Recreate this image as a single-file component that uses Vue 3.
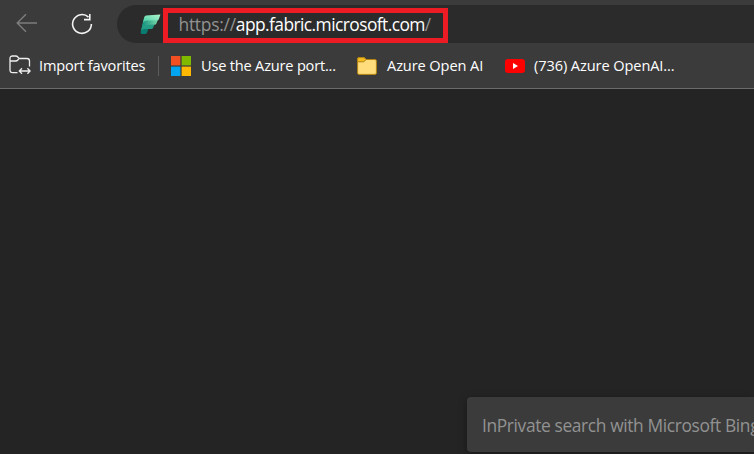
<script setup>
const bookmarks = [
  { icon: 'microsoft', label: 'Use the Azure port...' },
  { icon: 'folder', label: 'Azure Open AI' },
  { icon: 'youtube', label: '(736) Azure OpenAI...' },
]
</script>

<template>
  <div class="browser">
    <header class="chrome">
      <div class="toolbar">
        <svg class="back" width="22" height="20" viewBox="0 0 22 20">
          <path d="M21 10H1.5M10 1.2L1.2 10L10 18.8" />
        </svg>
        <svg class="reload" width="22" height="22" viewBox="0 0 22 22">
          <path d="M17.5 4.2A9.4 9.4 0 1 0 20.4 11M18.8 1V6.6H13" />
        </svg>
        <div class="address">
          <svg class="fabric" width="21" height="21" viewBox="0 0 21 21">
            <defs>
              <linearGradient id="mint" x1="0" y1="1" x2="1" y2="0">
                <stop offset="0" stop-color="#45cda5" /><stop offset="1" stop-color="#b0f5cc" />
              </linearGradient>
              <linearGradient id="teal" x1="0" y1="0" x2="1" y2="0">
                <stop offset="0" stop-color="#15917f" /><stop offset="1" stop-color="#75d8a9" />
              </linearGradient>
            </defs>
            <path fill="#087c70" d="M2.5 10L9 12.6L7.1 18.5Q6.5 20 5 20H2Q.2 20 .7 18Z" />
            <path fill="#249d86" d="M3 9.5L14.5 10.5L13 14Q12.5 15 11 15H4Q1.7 15.3 1 17.4L2.2 11.5Z" />
            <path fill="url(#teal)" d="M3.8 5.5H18L16.4 9.6Q16 10.8 14.5 10.8H5.5Q2.8 11 1.9 13.2L3 7.5Z" />
            <path fill="url(#mint)" d="M6 1.5L20.4.5L19 4.8Q18.6 6.5 17 6.5H6.5Q4 6.7 3 8.8L4.1 3.5Q4.5 1.8 6 1.5Z" />
          </svg>
          <span class="url">https://<b>app.fabric.microsoft.com</b>/</span>
          <div class="highlight"></div>
        </div>
      </div>
      <nav class="favorites">
        <div class="item import">
          <svg class="import-icon" width="22" height="20" viewBox="0 0 22 20">
            <path d="M8.5 17.6H3.5Q1 17.6 1 15.1V3.5Q1 1 3.5 1H6.8Q8 1 8.8 2L10.1 3.5H18Q20.5 3.5 20.5 6V11.5M1 6H6.8Q8 6 8.8 5L10.1 3.5M10.8 16H20.8M13 13.3L10.3 16L13 18.7M18.4 13.3L21.1 16L18.4 18.7" />
          </svg>
          <span>Import favorites</span>
        </div>
        <i class="divider"></i>
        <div v-for="b in bookmarks" :key="b.icon" class="item" :class="b.icon">
          <svg v-if="b.icon === 'microsoft'" width="20" height="20" viewBox="0 0 20 20">
            <path fill="#f25022" d="M0 0h9.4v9.4H0z" /><path fill="#7fba00" d="M10.6 0H20v9.4h-9.4z" />
            <path fill="#00a4ef" d="M0 10.6h9.4V20H0z" /><path fill="#ffb900" d="M10.6 10.6H20V20h-9.4z" />
          </svg>
          <svg v-else-if="b.icon === 'folder'" width="20" height="18" viewBox="0 0 20 18">
            <path fill="#ffdc7c" stroke="#b28313" d="M.6 2Q.6.6 2 .6H6.4Q7.4.6 8 1.4L9 2.5H18Q19.4 2.5 19.4 4V16Q19.4 17.4 18 17.4H2Q.6 17.4.6 16Z" />
            <path fill="#f5bd20" stroke="#b28313" d="M.6 2Q.6.6 2 .6H6.4Q7.4.6 8 1.4L9 2.5L7.7 4Q7 4.8 6 4.8H.6Z" />
          </svg>
          <svg v-else width="20" height="14" viewBox="0 0 20 14">
            <rect width="20" height="14" rx="3" fill="#f00" /><path fill="#fff" d="M8 4L13 7L8 10Z" />
          </svg>
          <span>{{ b.label }}</span>
        </div>
      </nav>
    </header>
    <main class="page">
      <div class="search">InPrivate search with Microsoft Bing</div>
    </main>
  </div>
</template>

<style>
body { background: #242424; }
</style>

<style scoped>
.browser {
  width: 754px;
  height: 454px;
  overflow: hidden;
  display: flex;
  flex-direction: column;
  font-family: "Open Sans", "Noto Sans", sans-serif;
  background: #242424;
}
.chrome {
  box-sizing: border-box;
  height: 89px;
  flex: none;
  background: #3b3b3b;
  border-bottom: 1px solid #6b6b6b;
}
svg { display: block; flex: none; }
.toolbar {
  height: 43px;
  display: flex;
  align-items: center;
  padding-left: 16px;
}
.back, .reload, .import-icon { fill: none; }
.back { stroke: #7d7d7d; stroke-width: 1.4; margin-top: 3px; }
.reload { stroke: #f3f3f3; stroke-width: 1.6; margin: 4px 0 0 33px; }
.address {
  position: relative;
  flex: 1;
  align-self: flex-end;
  height: 38px;
  margin-left: 24px;
  padding-left: 23px;
  display: flex;
  align-items: center;
  border-radius: 19px 0 0 19px;
  background: #2b2b2b;
}
.url {
  margin-left: 17.5px;
  color: #929292;
  font-size: 17.4px;
  letter-spacing: -0.25px;
  line-height: 24px;
  white-space: nowrap;
}
.url b { color: #fff; font-weight: 400; letter-spacing: -0.57px; }
.highlight {
  position: absolute;
  box-sizing: border-box;
  left: 46px;
  top: 3px;
  width: 285px;
  height: 35px;
  border: 5px solid #ed1c24;
}
.favorites {
  height: 45px;
  display: flex;
  align-items: center;
  padding-left: 9px;
  color: #fff;
  font-size: 14.6px;
  letter-spacing: -0.2px;
  line-height: 20px;
  white-space: nowrap;
}
.item { display: flex; align-items: center; gap: 10px; }
.item span { padding-bottom: 2px; }
.import { width: 149px; gap: 8px; }
.import-icon { stroke: #eee; stroke-width: 1.3; margin-bottom: 1px; }
.divider { width: 1px; height: 20px; margin-right: 12px; background: #5c5c5c; }
.microsoft { width: 186px; }
.folder { width: 148px; letter-spacing: -0.1px; }
.youtube { gap: 9px; letter-spacing: -0.1px; }
.page {
  flex: 1;
  display: flex;
  justify-content: flex-end;
  align-items: flex-end;
  padding-bottom: 2px;
}
.search {
  box-sizing: border-box;
  width: 287px;
  height: 55px;
  padding-left: 15px;
  overflow: hidden;
  white-space: nowrap;
  border-radius: 4px 0 0 4px;
  background: #3b3b3b;
  box-shadow: 0 2px 8px rgba(0, 0, 0, 0.35);
  color: #929292;
  font-size: 17.4px;
  letter-spacing: -0.38px;
  line-height: 57px;
}
</style>
